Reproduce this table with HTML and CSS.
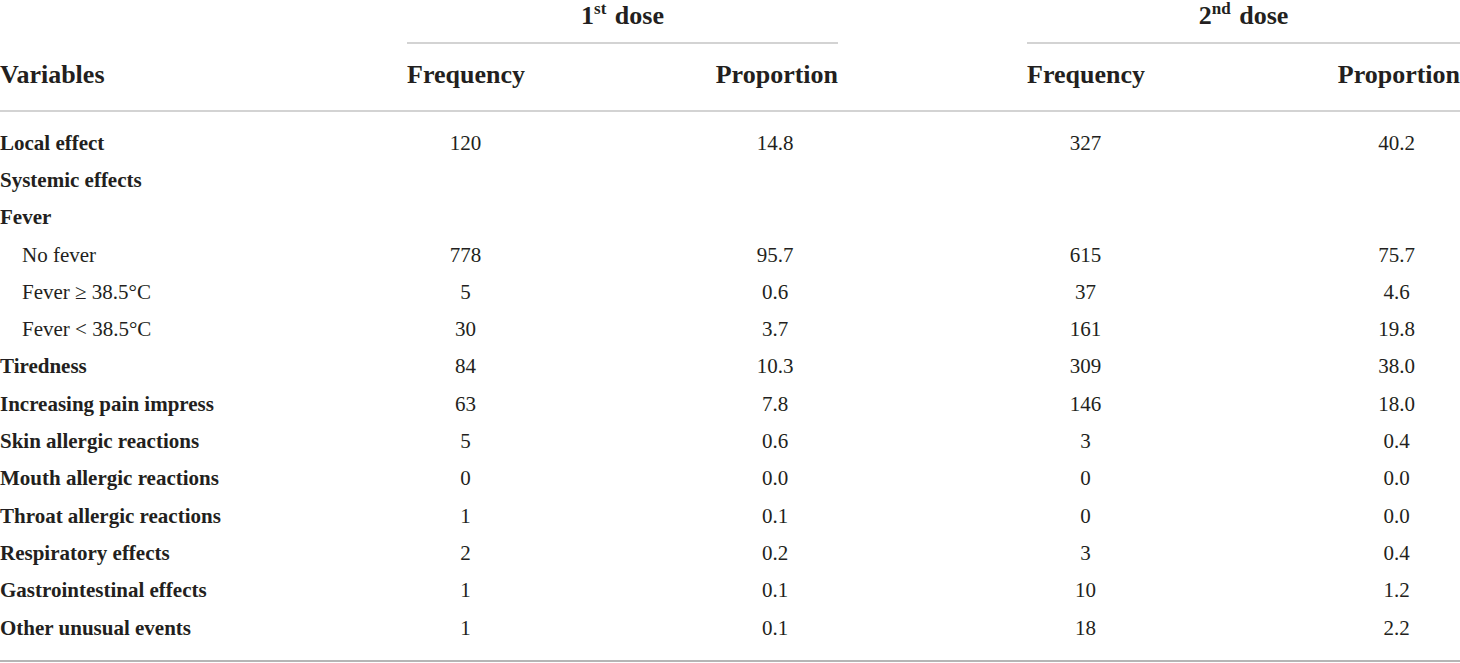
FILE: index.html
```html
<!DOCTYPE html>
<html lang="en">

<head>
    <meta charset="UTF-8">
    <meta name="viewport" content="width=device-width, initial-scale=1.0">
    <title>Adverse effects by dose</title>
    <link rel="stylesheet" href="styles.css">
</head>

<body>
    <table class="effects">
        <colgroup>
            <col class="c-var">
            <col class="c-freq">
            <col class="c-gap1">
            <col class="c-prop">
            <col class="c-gap2">
            <col class="c-freq">
            <col class="c-gap3">
            <col class="c-prop2">
        </colgroup>
        <thead>
            <tr class="group-row">
                <th></th>
                <th colspan="3" class="group">1<sup>st</sup> dose</th>
                <th></th>
                <th colspan="3" class="group">2<sup>nd</sup> dose</th>
            </tr>
            <tr class="head-row">
                <th class="label">Variables</th>
                <th class="left">Frequency</th>
                <th></th>
                <th class="right">Proportion</th>
                <th></th>
                <th class="left">Frequency</th>
                <th></th>
                <th class="right">Proportion</th>
            </tr>
        </thead>
        <tbody>
            <tr class="first">
                <td class="label bold">Local effect</td>
                <td>120</td><td></td><td>14.8</td><td></td><td>327</td><td></td><td>40.2</td>
            </tr>
            <tr>
                <td class="label bold">Systemic effects</td>
                <td></td><td></td><td></td><td></td><td></td><td></td><td></td>
            </tr>
            <tr>
                <td class="label bold">Fever</td>
                <td></td><td></td><td></td><td></td><td></td><td></td><td></td>
            </tr>
            <tr>
                <td class="label sub">No fever</td>
                <td>778</td><td></td><td>95.7</td><td></td><td>615</td><td></td><td>75.7</td>
            </tr>
            <tr>
                <td class="label sub">Fever &ge; 38.5&deg;C</td>
                <td>5</td><td></td><td>0.6</td><td></td><td>37</td><td></td><td>4.6</td>
            </tr>
            <tr>
                <td class="label sub">Fever &lt; 38.5&deg;C</td>
                <td>30</td><td></td><td>3.7</td><td></td><td>161</td><td></td><td>19.8</td>
            </tr>
            <tr>
                <td class="label bold">Tiredness</td>
                <td>84</td><td></td><td>10.3</td><td></td><td>309</td><td></td><td>38.0</td>
            </tr>
            <tr>
                <td class="label bold">Increasing pain impress</td>
                <td>63</td><td></td><td>7.8</td><td></td><td>146</td><td></td><td>18.0</td>
            </tr>
            <tr>
                <td class="label bold">Skin allergic reactions</td>
                <td>5</td><td></td><td>0.6</td><td></td><td>3</td><td></td><td>0.4</td>
            </tr>
            <tr>
                <td class="label bold">Mouth allergic reactions</td>
                <td>0</td><td></td><td>0.0</td><td></td><td>0</td><td></td><td>0.0</td>
            </tr>
            <tr>
                <td class="label bold">Throat allergic reactions</td>
                <td>1</td><td></td><td>0.1</td><td></td><td>0</td><td></td><td>0.0</td>
            </tr>
            <tr>
                <td class="label bold">Respiratory effects</td>
                <td>2</td><td></td><td>0.2</td><td></td><td>3</td><td></td><td>0.4</td>
            </tr>
            <tr>
                <td class="label bold">Gastrointestinal effects</td>
                <td>1</td><td></td><td>0.1</td><td></td><td>10</td><td></td><td>1.2</td>
            </tr>
            <tr class="last">
                <td class="label bold">Other unusual events</td>
                <td>1</td><td></td><td>0.1</td><td></td><td>18</td><td></td><td>2.2</td>
            </tr>
        </tbody>
    </table>
</body>

</html>
```

FILE: styles.css
```css
body {
    margin: 0;
    background-color: #fff;
    font-family: "Liberation Serif", "DejaVu Serif", serif;
    color: #231f20;
}

.effects {
    width: 1460px;
    table-layout: fixed;
    border-collapse: collapse;
}

.c-var { width: 407px; }
.c-freq { width: 117px; }
.c-gap1 { width: 188px; }
.c-prop { width: 126px; }
.c-gap2 { width: 189px; }
.c-gap3 { width: 189px; }
.c-prop2 { width: 127px; }

th,
td {
    padding: 0;
    white-space: nowrap;
}

th {
    font-size: 26px;
    font-weight: bold;
}

.group-row th {
    height: 42px;
    vertical-align: top;
    line-height: 32px;
}

.group-row .group {
    border-bottom: 2px solid #d3d3d3;
    text-align: center;
}

.group sup {
    font-size: 17px;
    line-height: 0;
    vertical-align: 10px;
    margin-right: 2px;
}

.head-row th {
    height: 62px;
    border-bottom: 2px solid #d3d3d3;
    padding-bottom: 4px;
}

.left { text-align: left; }
.right { text-align: right; }

th.label,
td.label {
    text-align: left;
}

td {
    font-size: 21px;
    height: 37.3px;
    text-align: center;
    line-height: 24px;
}

td.bold {
    font-weight: bold;
}

td.sub {
    padding-left: 22px;
}

tr.first td {
    padding-top: 12px;
}

tr.last td {
    padding-bottom: 14px;
    border-bottom: 2px solid #b5b5b5;
}
```
